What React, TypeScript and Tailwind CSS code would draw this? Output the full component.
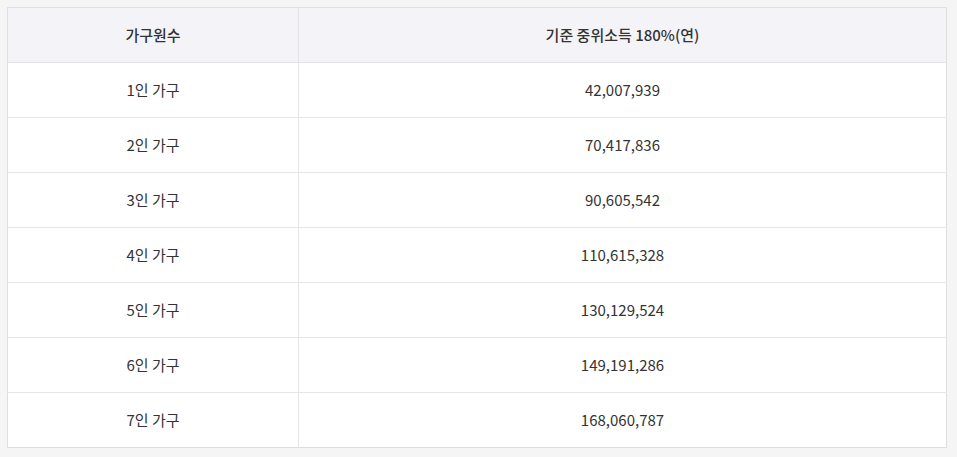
const ROWS = [
  ['1인 가구', '42,007,939'],
  ['2인 가구', '70,417,836'],
  ['3인 가구', '90,605,542'],
  ['4인 가구', '110,615,328'],
  ['5인 가구', '130,129,524'],
  ['6인 가구', '149,191,286'],
  ['7인 가구', '168,060,787'],
];

export default function App() {
  return (
    <div
      className="w-[957px] h-[457px] bg-[#f5f5f5] pl-[7px] pt-[7px]"
      style={{ fontFamily: '"Noto Sans CJK KR", "Noto Sans", sans-serif' }}
    >
      <table className="w-[940px] border-collapse border border-[#dedede] bg-white text-[15px] text-[#333] table-fixed">
        <colgroup>
          <col className="w-[291px]" />
          <col />
        </colgroup>
        <thead>
          <tr className="h-[55px] bg-[#f4f4f8]">
            <th className="font-medium border-r border-b border-[#e2e2e2]">가구원수</th>
            <th className="font-medium border-b border-[#e2e2e2]">기준 중위소득 180%(연)</th>
          </tr>
        </thead>
        <tbody>
          {ROWS.map(([label, value], i) => (
            <tr key={label} className="h-[55px]">
              <td className={`text-center border-r border-[#e6e6e6] ${i < ROWS.length - 1 ? 'border-b' : ''}`}>{label}</td>
              <td className={`text-center border-[#e6e6e6] ${i < ROWS.length - 1 ? 'border-b' : ''}`}>{value}</td>
            </tr>
          ))}
        </tbody>
      </table>
    </div>
  );
}
